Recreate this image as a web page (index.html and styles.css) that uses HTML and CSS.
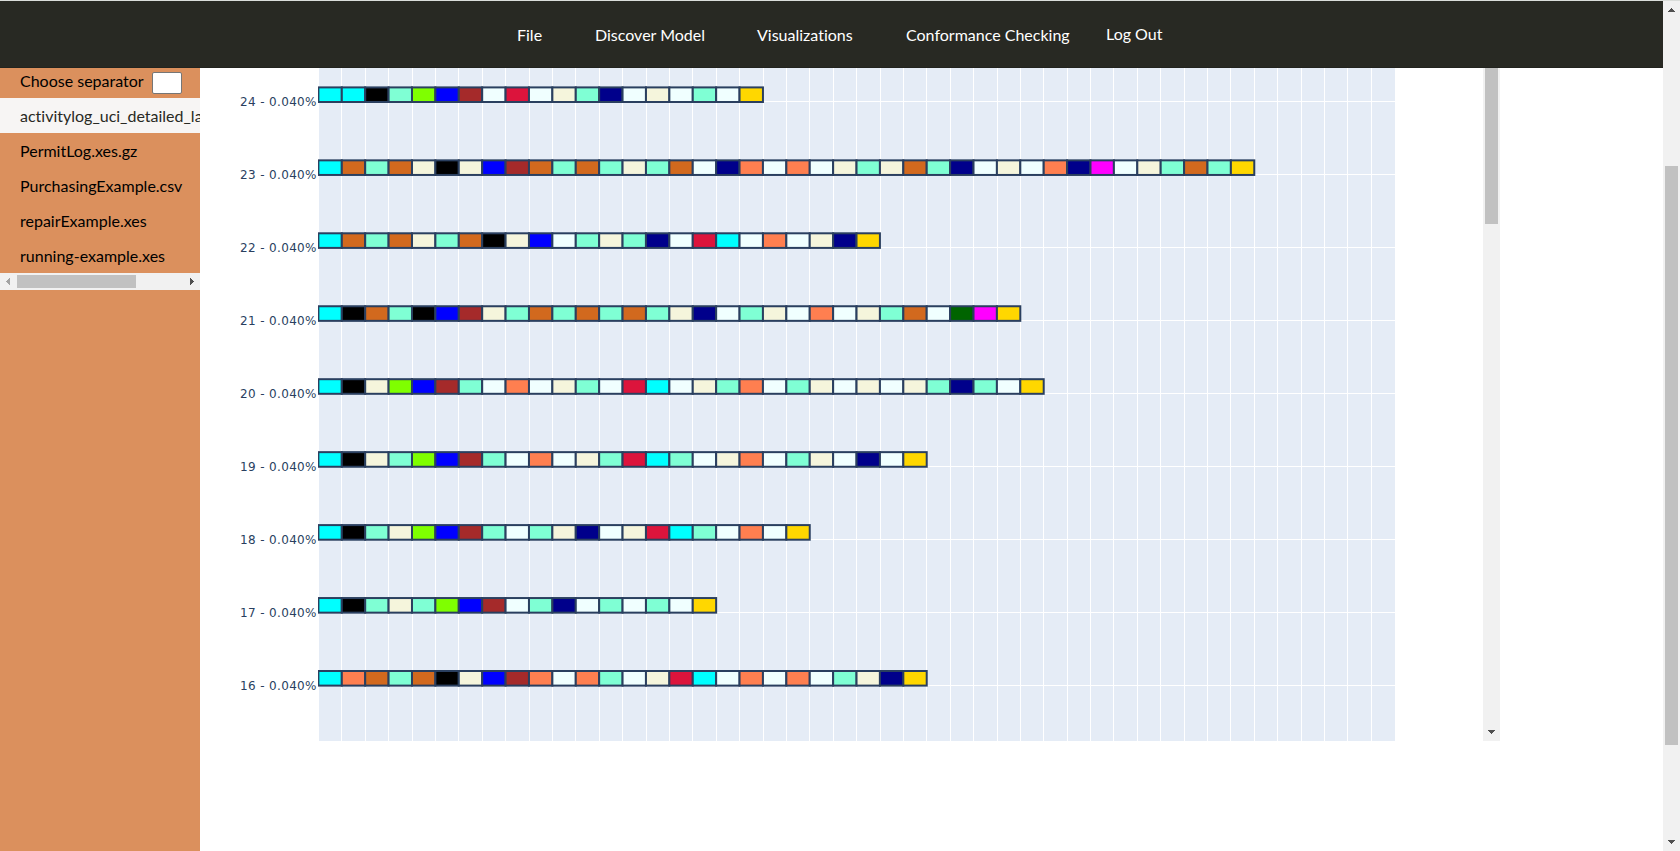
FILE: index.html
```html
<!DOCTYPE html>
<html lang="en">
<head>
<meta charset="utf-8">
<title>Variants</title>
<link rel="stylesheet" href="styles.css">
</head>
<body>
<div class="page">
  <header class="topbar">
    <nav class="nav">
      <a class="nav-file">File</a>
      <a class="nav-discover">Discover Model</a>
      <a class="nav-visual">Visualizations</a>
      <a class="nav-conf">Conformance Checking</a>
      <a class="nav-logout">Log Out</a>
    </nav>
  </header>
  <div class="content">
    <aside class="sidebar">
      <div class="separator"><span>Choose separator</span><input class="sep-input" type="text" aria-label="Separator"></div>
      <ul class="files">
        <li class="active">activitylog_uci_detailed_la</li>
        <li>PermitLog.xes.gz</li>
        <li>PurchasingExample.csv</li>
        <li>repairExample.xes</li>
        <li>running-example.xes</li>
      </ul>
      <div class="hscroll">
        <svg class="arrow-left" width="4" height="7" shape-rendering="crispEdges"><path d="M4 0V7L0 3.5Z" fill="#a3a3a3"/></svg>
        <div class="hthumb"></div>
        <svg class="arrow-right" width="4" height="7" shape-rendering="crispEdges"><path d="M0 0V7L4 3.5Z" fill="#505050"/></svg>
      </div>
    </aside>
    <main class="panel">
      <svg class="chart" id="chart" width="1283" height="673" viewBox="200 68 1283 673"></svg>
      <div class="vscroll inner">
        <div class="vthumb"></div>
        <svg class="down" width="7" height="4" shape-rendering="crispEdges"><path d="M0 0H7V1H6V2H5V3H4V4H3V3H2V2H1V1H0Z"/></svg>
      </div>
    </main>
  </div>
</div>
<div class="vscroll outer">
  <svg class="up" width="7" height="4" shape-rendering="crispEdges"><path d="M3 0H4V1H5V2H6V3H7V4H0V3H1V2H2V1H3Z"/></svg>
  <div class="vthumb"></div>
  <svg class="down" width="7" height="4" shape-rendering="crispEdges"><path d="M0 0H7V1H6V2H5V3H4V4H3V3H2V2H1V1H0Z"/></svg>
</div>
<script src="chart.js"></script>
</body>
</html>
```
FILE: styles.css
```css
* { box-sizing: border-box; }
body {
  margin: 0;
  height: 851px;
  display: flex;
  overflow: hidden;
  background: #fff;
  font: 16px/20px Lato, sans-serif;
  font-variant-ligatures: none;
  color: #000;
  border-top: 1px solid #dadddA;
}
.page { width: 1663px; display: flex; flex-direction: column; }
.topbar { height: 67px; background: #282923; border-bottom: 1px solid #22231e; }
.nav { display: flex; padding: 24px 0 0 517px; color: #fff; }
.nav a { white-space: nowrap; flex: none; }
.nav-file { width: 78px; }
.nav-discover { width: 162px; }
.nav-visual { width: 149px; }
.nav-conf { width: 200px; }
.nav-logout { margin-top: -1px; }
.content { flex: 1; display: flex; min-height: 0; }
.sidebar { width: 200px; background: #db905d; overflow: hidden; }
.separator { height: 30px; padding: 4px 0 0 20px; display: flex; gap: 8px; align-items: flex-start; }
.separator span { width: 124px; white-space: nowrap; line-height: 18px; }
.sep-input { width: 30px; height: 22px; padding: 0; border: 1px solid #767676; border-radius: 2px; background: #fff; }
.files { list-style: none; margin: 0; padding: 0; }
.files li { height: 35px; line-height: 35px; padding-left: 20px; white-space: nowrap; overflow: hidden; }
.files .active { background: #f7f5f4; color: #282923; }
.hscroll { height: 17px; background: #f1f1f1; display: flex; align-items: center; padding-left: 6px; }
.hthumb { width: 119px; height: 13px; margin-left: 7px; background: #c1c1c1; }
.arrow-right { margin-left: 54px; }
.panel { display: flex; height: 673px; }
.chart { display: block; }
.axis-label { font: 12px "DejaVu Sans", Verdana, sans-serif; fill: #2a3f5f; }
.vscroll { width: 17px; background: #f1f1f1; display: flex; flex-direction: column; align-items: center; fill: #505050; }
.vscroll .vthumb { width: 13px; background: #c1c1c1; }
.vscroll .down { margin-top: auto; }
.inner { height: 673px; padding-bottom: 7px; }
.inner .vthumb { height: 156px; }
.outer { height: 850px; padding: 7px 0; }
.outer .vthumb { height: 579px; margin-top: 154px; }
```
FILE: chart.js
```js
const colors = {
  c: 'cyan', o: 'chocolate', m: 'aquamarine', e: 'beige', k: 'black', b: 'blue',
  w: 'brown', a: 'azure', n: 'darkblue', r: 'coral', i: 'crimson',
  h: 'chartreuse', g: 'gold', f: 'fuchsia', d: 'darkgreen'
};
const traces = [
  [24, 'cckmhbwaiaemnaeamag'],
  [23, 'comoekebwomomemoanrar' + 'aemeomnaearnfaemomg'],
  [22, 'comoemokebamemnaicaraeng'],
  [21, 'ckomkbwemomomomenamearaemoadfg'],
  [20, 'ckehbwmaraemaicaemrameaeaemnmag'],
  [19, 'ckemhbwmaraemicmaerameanag'],
  [18, 'ckmehbwmamenaeicmarag'],
  [17, 'ckmemhbwamnamamag'],
  [16, 'cromokebwrarmaeicararameng']
];
const left = 318.4, step = 23.397, firstY = 102, rowStep = 72.95;
let s = '<clipPath id="plot"><rect x="318" y="68" width="1077" height="673"/></clipPath>';
s += '<rect x="319" y="68" width="1076" height="673" fill="#e5ecf6"/>';
for (let k = 1; k < 46; k++) {
  s += `<rect x="${Math.round(318 + k * step)}" y="68" width="1" height="673" fill="#fff"/>`;
}
traces.forEach(([id], r) => {
  s += `<rect x="319" y="${101 + r * 73}" width="1076" height="1" fill="#fff"/>`;
});
traces.forEach(([id, seq], r) => {
  const y = firstY + r * rowStep;
  s += '<g clip-path="url(#plot)">';
  [...seq].forEach((ch, i) => {
    s += `<rect x="${(left + i * step).toFixed(2)}" y="${(y - 14.6).toFixed(2)}" width="${step}" height="14.6" fill="${colors[ch]}" stroke="#2a3f5f" stroke-width="2"/>`;
  });
  s += '</g>';
  s += `<text class="axis-label" x="240" y="${106 + r * 73}" textLength="76.5">${id} - 0.040%</text>`;
});
document.getElementById('chart').innerHTML = s;
```
